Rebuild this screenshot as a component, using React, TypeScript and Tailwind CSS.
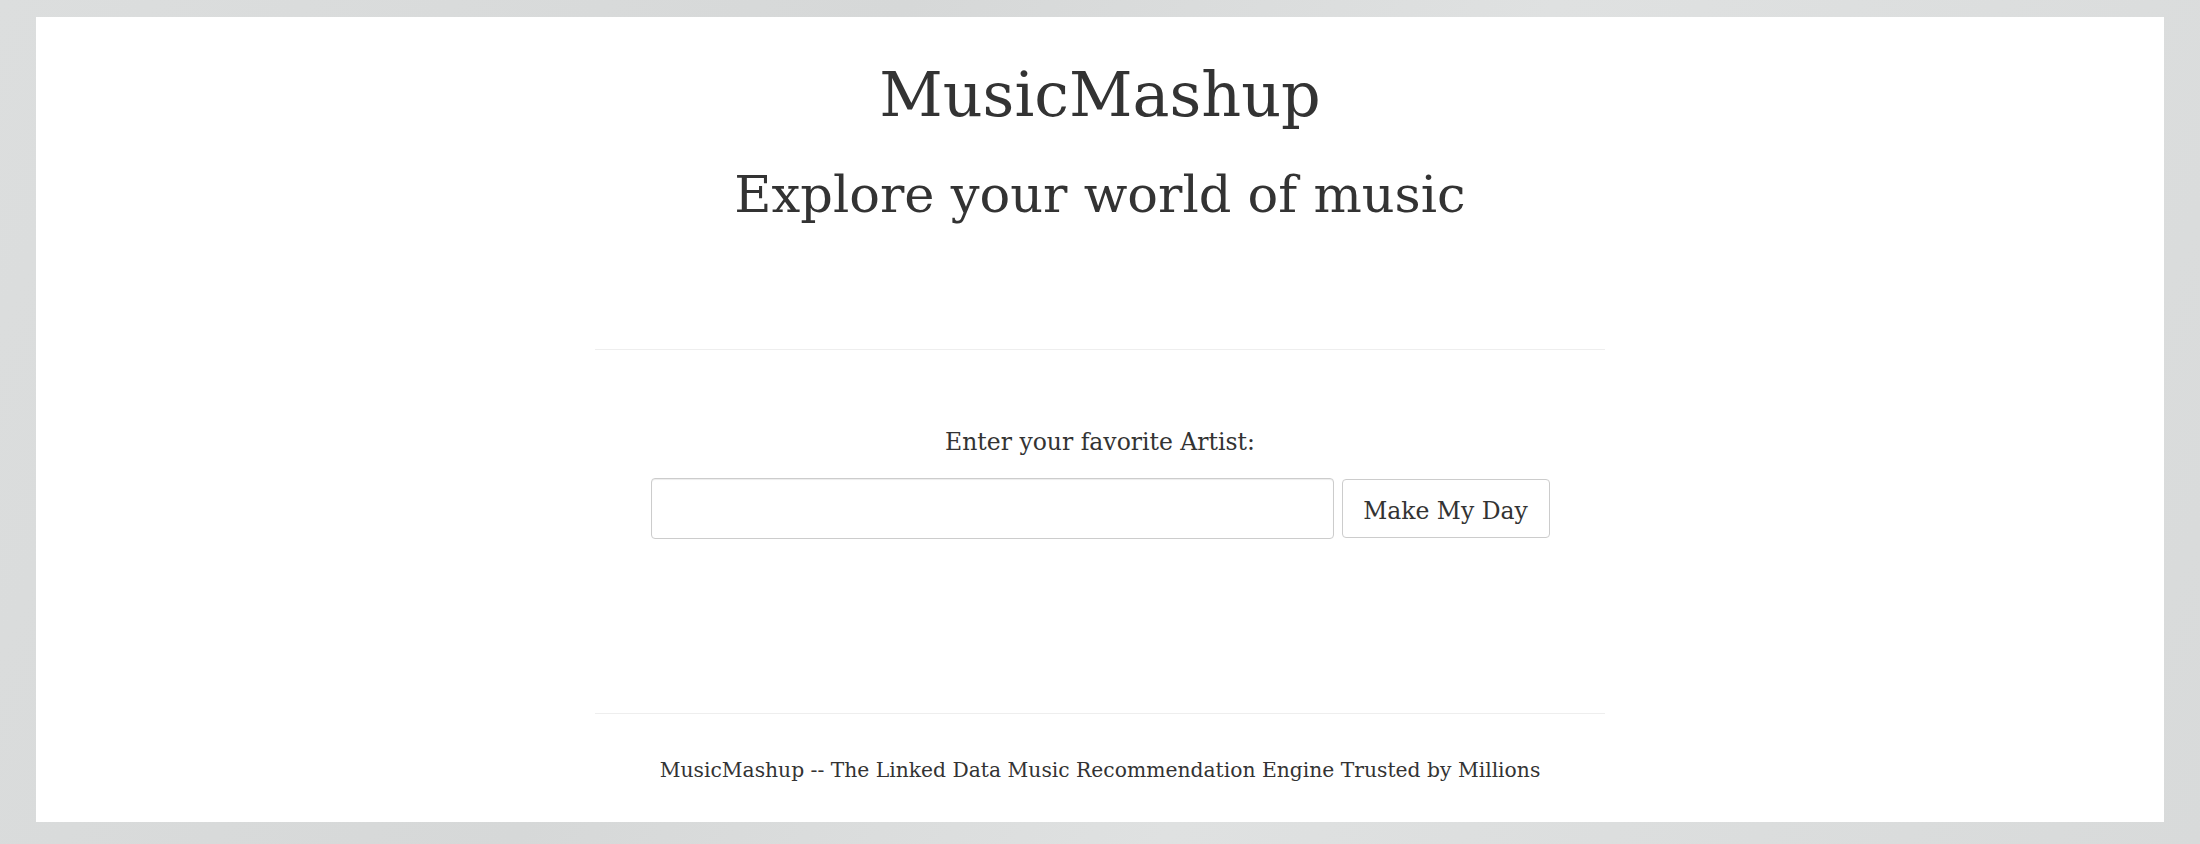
const serif = { fontFamily: '"DejaVu Serif", "Liberation Serif", serif' };

const App = () => {
  return (
    <div
      className="min-h-screen bg-[#d9dbdb] bg-[linear-gradient(115deg,#dcdede_0%,#d6d8d8_35%,#dfe1e1_60%,#d8dada_100%)] pl-[36px] pr-[36px] pt-[17px] pb-[22px] text-[#333333]"
      style={serif}
    >
      <div className="bg-white h-[805px] flex flex-col items-center pt-[47px]">
        <div className="w-[1010px] flex flex-col items-center">
          <h1 className="text-[62px] leading-[62px] font-normal">MusicMashup</h1>
          <h2 className="mt-[43px] text-[51px] leading-[51px] font-normal">Explore your world of music</h2>

          <hr className="mt-[129px] w-full border-t border-[#eeeeee]" />

          <label htmlFor="artist" className="mt-[80px] text-[23.5px] leading-[24px]">
            Enter your favorite Artist:
          </label>
          <form className="mt-[24px] flex gap-[8px]" onSubmit={(e) => e.preventDefault()}>
            <input
              id="artist"
              type="text"
              className="w-[683px] h-[61px] rounded-[4px] border border-[#cccccc] shadow-[inset_0_1px_1px_rgba(0,0,0,0.075)] px-3 text-[22px] outline-none"
            />
            <button
              type="submit"
              className="w-[208px] h-[59px] mt-[1px] rounded-[4px] border border-[#cccccc] bg-white text-[23.5px] leading-[59px] pt-[2px] text-[#333333]"
            >
              Make My Day
            </button>
          </form>

          <hr className="mt-[174px] w-full border-t border-[#eeeeee]" />

          <p className="mt-[46px] text-[20.3px] leading-[20px]">
            MusicMashup -- The Linked Data Music Recommendation Engine Trusted by Millions
          </p>
        </div>
      </div>
    </div>
  );
};

export default App;
